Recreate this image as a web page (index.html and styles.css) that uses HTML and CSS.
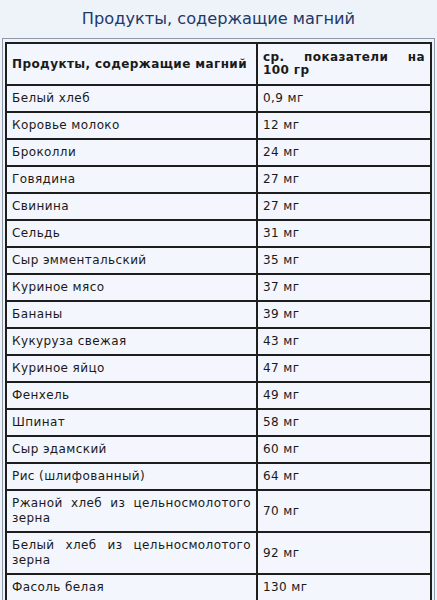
FILE: index.html
```html
<!DOCTYPE html>
<html lang="ru">
<head>
<meta charset="utf-8">
<title>Продукты, содержащие магний</title>
<link rel="stylesheet" href="styles.css">
</head>
<body>
<h1 class="title">Продукты, содержащие магний</h1>
<div class="frame">
<table class="mg">
<colgroup><col class="c1"><col class="c2"></colgroup>
<tr class="head"><th>Продукты, содержащие магний</th><th class="just">ср. показатели на 100 гр</th></tr>
<tr><td>Белый хлеб</td><td>0,9 мг</td></tr>
<tr><td>Коровье молоко</td><td>12 мг</td></tr>
<tr><td>Броколли</td><td>24 мг</td></tr>
<tr><td>Говядина</td><td>27 мг</td></tr>
<tr><td>Свинина</td><td>27 мг</td></tr>
<tr><td>Сельдь</td><td>31 мг</td></tr>
<tr><td>Сыр эмментальский</td><td>35 мг</td></tr>
<tr><td>Куриное мясо</td><td>37 мг</td></tr>
<tr><td>Бананы</td><td>39 мг</td></tr>
<tr><td>Кукуруза свежая</td><td>43 мг</td></tr>
<tr><td>Куриное яйцо</td><td>47 мг</td></tr>
<tr><td>Фенхель</td><td>49 мг</td></tr>
<tr><td>Шпинат</td><td>58 мг</td></tr>
<tr><td>Сыр эдамский</td><td>60 мг</td></tr>
<tr><td>Рис (шлифованный)</td><td>64 мг</td></tr>
<tr><td class="just">Ржаной хлеб из цельносмолотого зерна</td><td>70 мг</td></tr>
<tr><td class="just">Белый хлеб из цельносмолотого зерна</td><td>92 мг</td></tr>
<tr><td>Фасоль белая</td><td>130 мг</td></tr>
</table>
</div>
</body>
</html>
```
FILE: styles.css
```css
html, body {
  margin: 0;
  padding: 0;
  background: #eef2f9;
}
body {
  font-family: "DejaVu Sans", Verdana, sans-serif;
  color: #1a1a1a;
}
.title {
  margin: 0;
  height: 38px;
  line-height: 38px;
  text-align: center;
  font-size: 16.2px;
  font-weight: normal;
  color: #22386a;
}
.frame {
  margin: 0 2px 0 2px;
  border: 1px solid #8e98a6;
  padding: 3px 2px 0 2px;
}
.mg {
  width: 100%;
  border-collapse: collapse;
  table-layout: fixed;
  background: #f3f6fc;
}
.c1 { width: 251px; }
.mg td, .mg th {
  border: 2px solid #1e1e1e;
  padding: 5px 5px 5px 5px;
  font-size: 12px;
  letter-spacing: 0.4px;
  line-height: 15px;
  text-align: left;
  vertical-align: middle;
  font-weight: normal;
}
.mg th {
  font-weight: bold;
  line-height: 13px;
  padding-top: 7px;
  padding-bottom: 7px;
}
.mg .just {
  text-align: justify;
}
```
